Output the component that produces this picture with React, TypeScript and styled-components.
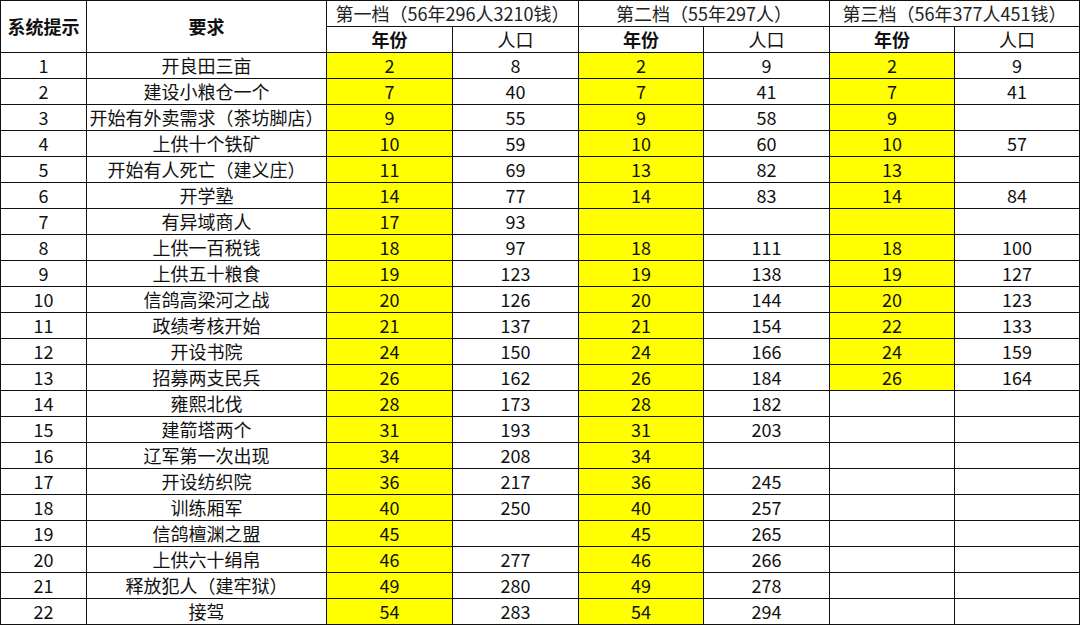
import { createGlobalStyle, styled } from 'styled-components';

type Tier = [string, string];
type Row = {
  no: number;
  task: string;
  tiers: Tier[];
  hl: boolean[];
};

const GlobalStyle = createGlobalStyle`
  html, body {
    margin: 0;
    padding: 0;
    background: #ffffff;
  }
  body {
    font-family: 'Noto Sans CJK SC', 'Noto Sans', sans-serif;
    color: #111;
  }
`;

const raw: [string, string[], number][] = [
  ['开良田三亩', ['2', '8', '2', '9', '2', '9'], 3],
  ['建设小粮仓一个', ['7', '40', '7', '41', '7', '41'], 3],
  ['开始有外卖需求（茶坊脚店）', ['9', '55', '9', '58', '9', ''], 3],
  ['上供十个铁矿', ['10', '59', '10', '60', '10', '57'], 3],
  ['开始有人死亡（建义庄）', ['11', '69', '13', '82', '13', ''], 3],
  ['开学塾', ['14', '77', '14', '83', '14', '84'], 3],
  ['有异域商人', ['17', '93', '', '', '', ''], 3],
  ['上供一百税钱', ['18', '97', '18', '111', '18', '100'], 3],
  ['上供五十粮食', ['19', '123', '19', '138', '19', '127'], 3],
  ['信鸽高梁河之战', ['20', '126', '20', '144', '20', '123'], 3],
  ['政绩考核开始', ['21', '137', '21', '154', '22', '133'], 3],
  ['开设书院', ['24', '150', '24', '166', '24', '159'], 3],
  ['招募两支民兵', ['26', '162', '26', '184', '26', '164'], 3],
  ['雍熙北伐', ['28', '173', '28', '182', '', ''], 2],
  ['建箭塔两个', ['31', '193', '31', '203', '', ''], 2],
  ['辽军第一次出现', ['34', '208', '34', '', '', ''], 2],
  ['开设纺织院', ['36', '217', '36', '245', '', ''], 2],
  ['训练厢军', ['40', '250', '40', '257', '', ''], 2],
  ['信鸽檀渊之盟', ['45', '', '45', '265', '', ''], 2],
  ['上供六十绢帛', ['46', '277', '46', '266', '', ''], 2],
  ['释放犯人（建牢狱）', ['49', '280', '49', '278', '', ''], 2],
  ['接驾', ['54', '283', '54', '294', '', ''], 2],
];

const rows: Row[] = raw.map(([task, v, n], i) => ({
  no: i + 1,
  task,
  tiers: [
    [v[0], v[1]],
    [v[2], v[3]],
    [v[4], v[5]],
  ],
  hl: [0, 1, 2].map((k) => k < n),
}));

const tiers = ['第一档（56年296人3210钱）', '第二档（55年297人）', '第三档（56年377人451钱）'];

const colWidths = [86, 240, 126, 126, 125, 126, 125, 125];

const App = () => {
  return (
    <>
      <GlobalStyle />
      <Sheet>
        <colgroup>
          {colWidths.map((w, i) => (
            <col key={i} style={{ width: w }} />
          ))}
        </colgroup>
        <thead>
          <tr>
            <HeadCell rowSpan={2}>系统提示</HeadCell>
            <HeadCell rowSpan={2}>要求</HeadCell>
            {tiers.map((t) => (
              <TierCell key={t} colSpan={2}>
                {t}
              </TierCell>
            ))}
          </tr>
          <tr>
            {tiers.map((t) => [
              <SubCell key={t + 'y'} $bold>
                年份
              </SubCell>,
              <SubCell key={t + 'p'} $inner>
                人口
              </SubCell>,
            ])}
          </tr>
        </thead>
        <tbody>
          {rows.map((r) => (
            <tr key={r.no}>
              <Cell>{r.no}</Cell>
              <Cell>{r.task}</Cell>
              {r.tiers.map((t, k) => [
                <YearCell key={k + 'y'} $hl={r.hl[k]}>
                  {t[0]}
                </YearCell>,
                <Cell key={k + 'p'} $inner>
                  {t[1]}
                </Cell>,
              ])}
            </tr>
          ))}
        </tbody>
      </Sheet>
    </>
  );
};

export default App;

const Sheet = styled.table`
  width: 1080px;
  table-layout: fixed;
  border-collapse: collapse;
  font-size: 18px;
  line-height: 18px;

  tr {
    height: 26px;
  }
`;

const Cell = styled.td<{ $inner?: boolean }>`
  height: 23px;
  padding: 0 0 2px;
  border: 1px solid #111;
  ${(p) => (p.$inner ? 'border-left: 1px solid #8c8c8c;' : '')}
  text-align: center;
  vertical-align: middle;
  white-space: nowrap;
  overflow: hidden;
  color: #111;
`;

const YearCell = styled(Cell)<{ $hl: boolean }>`
  background: ${(p) => (p.$hl ? '#ffff00' : '#ffffff')};
`;

const HeadCell = styled.th`
  padding: 0 0 2px;
  border: 1px solid #111;
  font-weight: 700;
  text-align: center;
  vertical-align: middle;
  color: #111;
`;

const TierCell = styled.th`
  height: 23px;
  padding: 0 0 2px;
  border: 1px solid #111;
  font-weight: 400;
  text-align: center;
  vertical-align: middle;
  white-space: nowrap;
  color: #222;
`;

const SubCell = styled.th<{ $bold?: boolean; $inner?: boolean }>`
  height: 23px;
  padding: 0 0 2px;
  border: 1px solid #111;
  ${(p) => (p.$inner ? 'border-left: 1px solid #8c8c8c;' : '')}
  font-weight: ${(p) => (p.$bold ? 700 : 400)};
  text-align: center;
  vertical-align: middle;
  color: #111;
`;
